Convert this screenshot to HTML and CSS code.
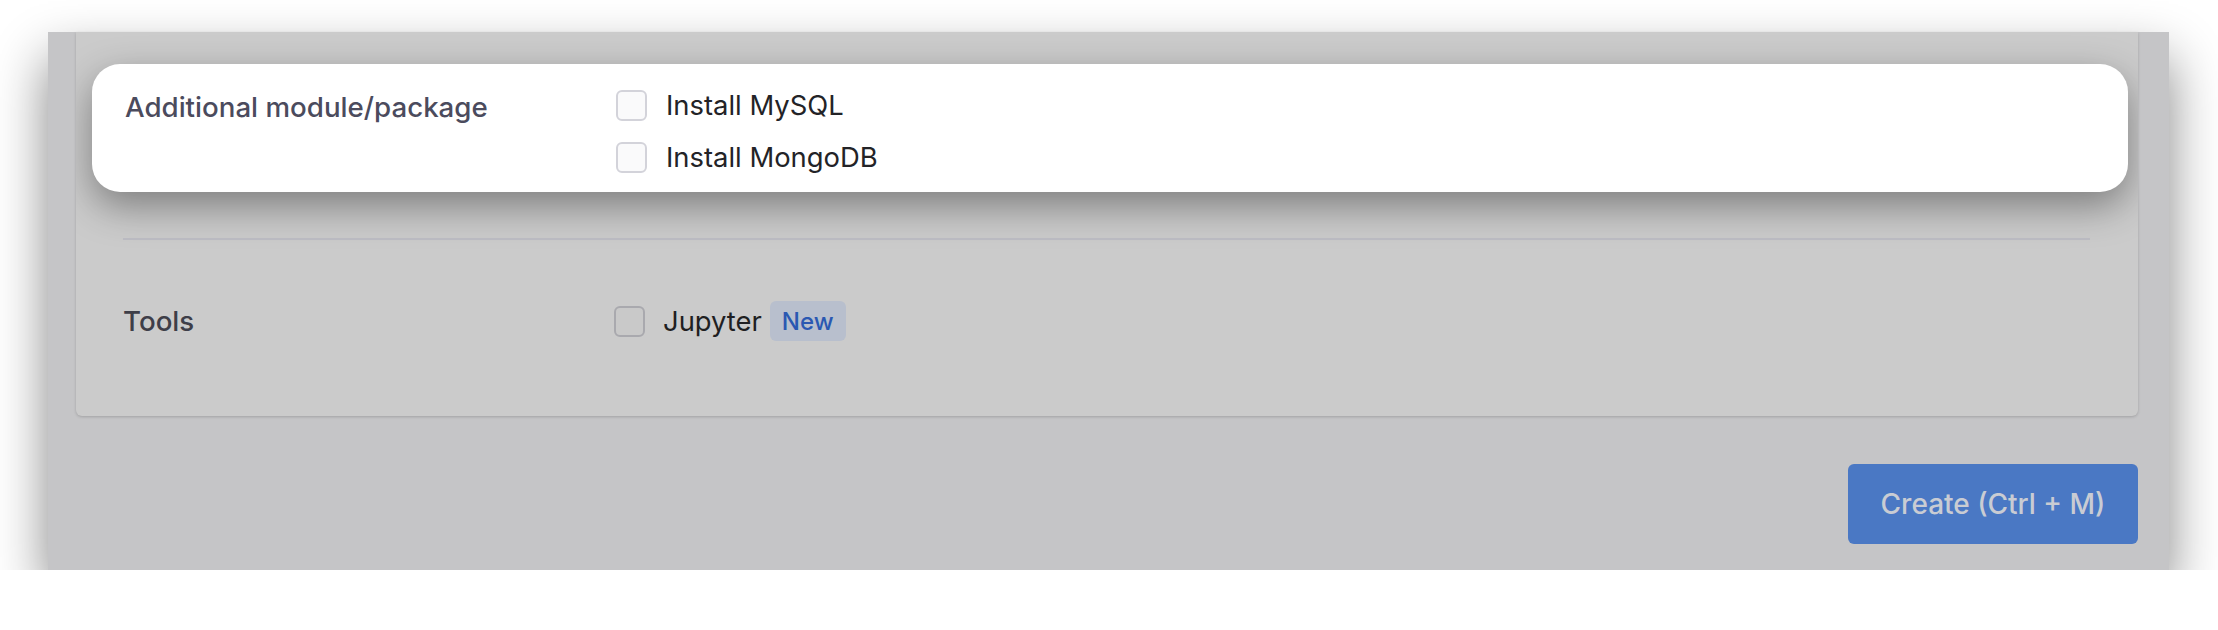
FILE: index.html
```html
<!DOCTYPE html>
<html>
	<head>
		<meta charset="utf-8">
		<title>Create</title>
		<link rel="stylesheet" href="styles.css">
	</head>
	<body>
		<div class="frame">
			<div class="card">
				<!-- highlighted row -->
				<div class="field spotlight">
					<div class="fieldLabel">Additional module/package</div>
					<div class="options">
						<label class="option"><span class="box"></span>Install MySQL</label>
						<label class="option"><span class="box"></span>Install MongoDB</label>
					</div>
				</div>
				<div class="divider"></div>
				<div class="field tools">
					<div class="fieldLabel">Tools</div>
					<div class="options">
						<label class="option"><span class="box"></span>Jupyter<span class="badge">New</span></label>
					</div>
				</div>
			</div>
			<div class="footer">
				<button type="button" class="createBtn">Create (Ctrl + M)</button>
			</div>
		</div>
	</body>
</html>
```

FILE: styles.css
```css
body {
	margin: 0;
	padding: 32px 0 0 48px;
	background: #fff;
	font-family: "Inter", "Noto Sans", sans-serif;
}
.frame {
	width: 2121px;
	height: 538px;
	box-sizing: border-box;
	padding: 0 31px 0 28px;
	background: #c5c5c7;
	box-shadow: 0 26px 50px rgba(0, 0, 0, 0.48);
}
.card {
	height: 384px;
	box-sizing: border-box;
	padding-top: 32px;
	background: #cbcbcb;
	border-radius: 0 0 6px 6px;
	box-shadow: 0 1px 3px rgba(0, 0, 0, 0.18);
	overflow: hidden;
}
.field {
	display: flex;
	align-items: flex-start;
}
.fieldLabel {
	width: 491px;
	flex: none;
	font-size: 27.7px;
	line-height: 31px;
	font-weight: 500;
	color: #4b4b5d;
	padding-top: 3px;
}
.options {
	display: flex;
	flex-direction: column;
	gap: 19px;
}
.option {
	display: flex;
	align-items: center;
	font-size: 27.4px;
	line-height: 33px;
	color: #232327;
}
.box {
	width: 31px;
	height: 31px;
	box-sizing: border-box;
	margin-right: 19px;
	border: 2px solid #d3d3da;
	border-radius: 6px;
	background: #fafafb;
}
.spotlight {
	margin: 0 10px 0 16px;
	padding: 25px 33px 18px;
	background: #fff;
	border-radius: 28px;
	box-shadow: 0 14px 38px rgba(0, 0, 0, 0.38);
	position: relative;
}
.divider {
	height: 2px;
	margin: 46px 48px 0 47px;
	background: #bdbdc4;
}
.tools {
	margin-top: 61px;
	padding-left: 47px;
	align-items: center;
	height: 40px;
}
.tools .fieldLabel {
	color: #3e3e48;
	padding-top: 0;
}
.tools .option {
	color: #1f1f22;
}
.tools .box {
	border-color: #a9a9ae;
	background: #c9c9c9;
	margin-right: 18px;
}
.badge {
	margin-left: 8px;
	height: 40px;
	padding: 0 12px;
	display: inline-flex;
	align-items: center;
	background: #b8bfcd;
	color: #2a58b2;
	font-size: 24px;
	font-weight: 500;
	border-radius: 6px;
}
.footer {
	display: flex;
	justify-content: flex-end;
	margin-top: 48px;
}
.createBtn {
	height: 80px;
	width: 290px;
	border: none;
	border-radius: 6px;
	background: #4a78c4;
	color: #c9ccd3;
	font-family: "Inter", "Noto Sans", sans-serif;
	font-size: 28px;
	font-weight: 500;
}
```
